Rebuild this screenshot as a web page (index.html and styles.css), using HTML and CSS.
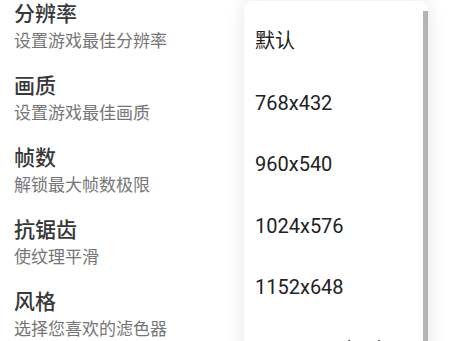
FILE: index.html
```html
<!DOCTYPE html>
<html lang="zh-CN">
<head>
    <meta charset="UTF-8">
    <meta name="viewport" content="width=device-width, initial-scale=1.0">
    <title>设置</title>
    <link rel="stylesheet" href="styles.css">
</head>
<body>
    <div class="settings">
        <div class="setting">
            <div class="setting-title">分辨率</div>
            <div class="setting-desc">设置游戏最佳分辨率</div>
        </div>
        <div class="setting">
            <div class="setting-title">画质</div>
            <div class="setting-desc">设置游戏最佳画质</div>
        </div>
        <div class="setting">
            <div class="setting-title">帧数</div>
            <div class="setting-desc">解锁最大帧数极限</div>
        </div>
        <div class="setting">
            <div class="setting-title">抗锯齿</div>
            <div class="setting-desc">使纹理平滑</div>
        </div>
        <div class="setting">
            <div class="setting-title">风格</div>
            <div class="setting-desc">选择您喜欢的滤色器</div>
        </div>
    </div>

    <div class="menu">
        <div class="menu-item">默认</div>
        <div class="menu-item">768x432</div>
        <div class="menu-item">960x540</div>
        <div class="menu-item">1024x576</div>
        <div class="menu-item">1152x648</div>
        <div class="menu-item">1280x720(HD)</div>
        <div class="scrollbar"></div>
    </div>
</body>
</html>
```

FILE: styles.css
```css
body {
    margin: 0;
    padding: 0;
    background-color: #fff;
    font-family: Roboto, "Noto Sans CJK SC", sans-serif;
    overflow: hidden;
    height: 341px;
}

.settings {
    padding-left: 14px;
}

.setting {
    height: 72px;
}

.setting-title {
    font-size: 21px;
    line-height: 28px;
    color: #383838;
    font-weight: 500;
}

.setting-desc {
    font-size: 17px;
    line-height: 26px;
    color: #767676;
}

.menu {
    position: absolute;
    left: 244px;
    top: 1px;
    width: 184px;
    height: 400px;
    padding-top: 10px;
    background-color: #fff;
    border-radius: 8px 8px 0 0;
    box-shadow: 0 0 18px rgba(0, 0, 0, 0.1);
}

.menu-item {
    height: 61.5px;
    line-height: 61.5px;
    padding-left: 11px;
    font-size: 20px;
    color: #222;
}

.scrollbar {
    position: absolute;
    right: 0;
    top: 10px;
    width: 5px;
    height: 390px;
    background-color: #b4b4b4;
}
```
